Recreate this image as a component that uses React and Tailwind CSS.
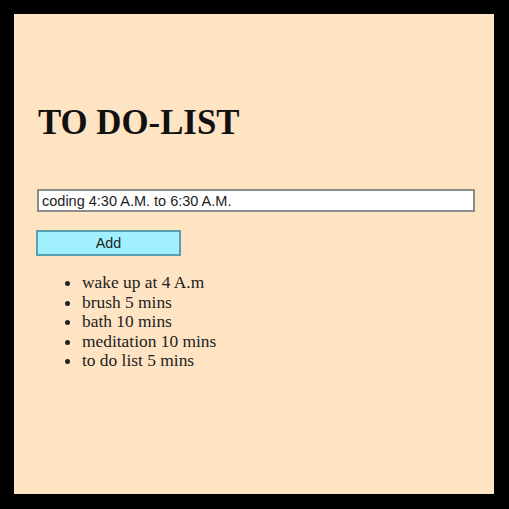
import React, { useState } from 'react';

const tasks = [
  'wake up at 4 A.m',
  'brush 5 mins',
  'bath 10 mins',
  'meditation 10 mins',
  'to do list 5 mins',
];

export default function App() {
  const [text, setText] = useState('coding 4:30 A.M. to 6:30 A.M.');

  return (
    <div className="w-[509px] h-[509px] bg-black pt-[14px] pl-[14px] pr-[15px] pb-[15px]">
      <div className="h-full bg-[#ffe4c4] pl-[23px] pr-[19px] pt-[89px] flex flex-col items-start">
        {/* Title */}
        <h1 className="font-['Liberation_Serif',serif] font-bold text-[34.8px] leading-[40px] text-[#111] pl-px">
          TO DO-LIST
        </h1>

        <input
          value={text}
          onChange={(e) => setText(e.target.value)}
          className="mt-[46px] w-[438px] h-[23px] bg-white border-2 border-[#8c8c8c] px-[3px] font-['Liberation_Sans',sans-serif] text-[14.5px] text-[#222] outline-none"
        />

        <button className="mt-[18px] -ml-px w-[145px] h-[26px] bg-[#a0f0ff] border-2 border-[#5b9fae] pt-px font-['Liberation_Sans',sans-serif] text-[14.3px] text-[#222]">
          Add
        </button>

        {/* Items */}
        <ul className="mt-[17px] pl-[45px] list-disc font-['Liberation_Serif',serif] text-[17.4px] leading-[19.5px] text-[#222]">
          {tasks.map((t) => (
            <li key={t}>{t}</li>
          ))}
        </ul>
      </div>
    </div>
  );
}
